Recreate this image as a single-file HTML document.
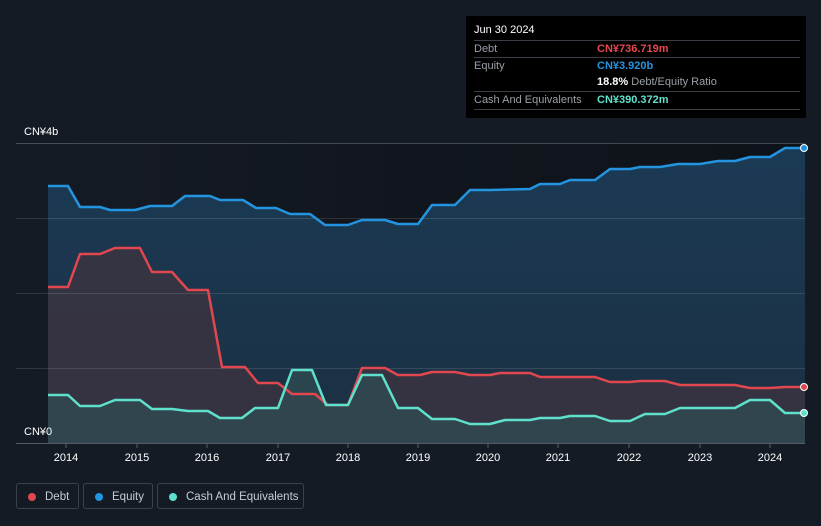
<!DOCTYPE html><html><head><style>
body{margin:0;width:821px;height:526px;background:#151b25;font-family:"Liberation Sans",sans-serif;overflow:hidden;position:relative}
.tt{position:absolute;left:466px;top:16px;width:340px;height:102px;background:#000;color:#fff;font-size:11px}
.row{position:absolute;left:8px;width:326px;border-top:1px solid #3a3f47;height:17px;line-height:17px}
.row span{position:absolute;left:123px}
.lg{position:absolute;top:483px;height:26px;border:1px solid #3b414b;border-radius:3px;color:#c8ccd2;font-size:11.5px;line-height:26px;box-sizing:border-box}
.lg i{position:absolute;left:11px;top:9px;width:8px;height:8px;border-radius:50%}
</style></head><body>
<svg width="821" height="526" style="position:absolute;left:0;top:0">
<defs>
<linearGradient id="eg" x1="0" y1="0" x2="0" y2="1"><stop offset="0" stop-color="#1b3a55"/><stop offset="1" stop-color="#1b3042"/></linearGradient>
<linearGradient id="bg" x1="0" y1="0" x2="1" y2="0"><stop offset="0" stop-color="#151b25"/><stop offset="0.5" stop-color="#11161e"/><stop offset="1" stop-color="#0e1219"/></linearGradient>
</defs>
<rect x="16" y="143" width="789" height="300" fill="url(#bg)"/>
<g stroke-linejoin="round">
<polygon fill="url(#eg)" points="48,443 48,186 68,186 80,207 100,207 110,210 135,210 150,206 172,206 185,196 210,196 220,200 243,200 256,208 276,208 290,214 310,214 325,225 348,225 362,220 385,220 398,224 418,224 432,205 455,205 470,190 490,190 530,189 540,184 560,184 570,180 595,180 610,169 630,169 640,167 660,167 678,164 700,164 718,161 735,161 750,157 770,157 785,148 805,148 805,443"/>
<polygon fill="#3a3441" opacity="0.85" points="48,443 48,287 68,287 80,254 100,254 115,248 140,248 152,272 172,272 188,290 208,290 222,367 245,367 258,383 278,383 292,394 315,394 328,405 348,405 362,368 385,368 398,375 420,375 432,372 455,372 470,375 490,375 500,373 530,373 540,377 595,377 610,382 630,382 640,381 665,381 680,385 735,385 750,388 770,388 785,387 805,387 805,443"/>
<polygon fill="#2f4a50" opacity="0.8" points="48,443 48,395 68,395 80,406 100,406 115,400 140,400 152,409 172,409 188,411 208,411 220,418 242,418 255,408 278,408 292,370 312,370 326,405 348,405 362,375 382,375 398,408 418,408 432,419 455,419 470,424 490,424 505,420 530,420 540,418 560,418 570,416 595,416 610,421 630,421 645,414 665,414 680,408 735,408 750,400 770,400 785,413 805,413 805,443"/>
</g>
<g stroke="#ffffff" stroke-opacity="0.12"><line x1="16" y1="218.5" x2="805" y2="218.5"/><line x1="16" y1="293.5" x2="805" y2="293.5"/><line x1="16" y1="368.5" x2="805" y2="368.5"/></g>
<line x1="16" y1="143.5" x2="805" y2="143.5" stroke="#ffffff" stroke-opacity="0.22"/>
<line x1="16" y1="443.5" x2="805" y2="443.5" stroke="#555c66"/>
<g fill="none" stroke-width="2.5" stroke-linejoin="round">
<polyline stroke="#2394df" points="48,186 68,186 80,207 100,207 110,210 135,210 150,206 172,206 185,196 210,196 220,200 243,200 256,208 276,208 290,214 310,214 325,225 348,225 362,220 385,220 398,224 418,224 432,205 455,205 470,190 490,190 530,189 540,184 560,184 570,180 595,180 610,169 630,169 640,167 660,167 678,164 700,164 718,161 735,161 750,157 770,157 785,148 805,148"/>
<polyline stroke="#e0474f" points="48,287 68,287 80,254 100,254 115,248 140,248 152,272 172,272 188,290 208,290 222,367 245,367 258,383 278,383 292,394 315,394 328,405 348,405 362,368 385,368 398,375 420,375 432,372 455,372 470,375 490,375 500,373 530,373 540,377 595,377 610,382 630,382 640,381 665,381 680,385 735,385 750,388 770,388 785,387 805,387"/>
<polyline stroke="#5fe0cc" points="48,395 68,395 80,406 100,406 115,400 140,400 152,409 172,409 188,411 208,411 220,418 242,418 255,408 278,408 292,370 312,370 326,405 348,405 362,375 382,375 398,408 418,408 432,419 455,419 470,424 490,424 505,420 530,420 540,418 560,418 570,416 595,416 610,421 630,421 645,414 665,414 680,408 735,408 750,400 770,400 785,413 805,413"/>
</g>
<circle cx="804" cy="148" r="3.5" fill="#2394df" stroke="#fff"/>
<circle cx="804" cy="387" r="3.5" fill="#e0474f" stroke="#fff"/>
<circle cx="804" cy="413" r="3.5" fill="#5fe0cc" stroke="#fff"/>
<g stroke="#555c66"><line x1="66" y1="443" x2="66" y2="448"/><line x1="137" y1="443" x2="137" y2="448"/><line x1="207" y1="443" x2="207" y2="448"/><line x1="278" y1="443" x2="278" y2="448"/><line x1="348" y1="443" x2="348" y2="448"/><line x1="418" y1="443" x2="418" y2="448"/><line x1="488" y1="443" x2="488" y2="448"/><line x1="558" y1="443" x2="558" y2="448"/><line x1="629" y1="443" x2="629" y2="448"/><line x1="700" y1="443" x2="700" y2="448"/><line x1="770" y1="443" x2="770" y2="448"/></g>
<g fill="#fff" font-size="11" text-anchor="middle" font-family="Liberation Sans,sans-serif">
<text x="66" y="461">2014</text><text x="137" y="461">2015</text><text x="207" y="461">2016</text><text x="278" y="461">2017</text><text x="348" y="461">2018</text><text x="418" y="461">2019</text><text x="488" y="461">2020</text><text x="558" y="461">2021</text><text x="629" y="461">2022</text><text x="700" y="461">2023</text><text x="770" y="461">2024</text>
</g>
<text x="24" y="135" fill="#fff" font-size="11" font-family="Liberation Sans,sans-serif">CN¥4b</text>
<text x="24" y="435" fill="#fff" font-size="11" font-family="Liberation Sans,sans-serif">CN¥0</text>
</svg>
<div class="tt">
<div style="position:absolute;left:8px;top:8px;font-size:11px">Jun 30 2024</div>
<div class="row" style="top:24px;color:#9aa0a8">Debt<span style="color:#e8474f;font-weight:bold">CN¥736.719m</span></div>
<div class="row" style="top:41px;color:#9aa0a8">Equity<span style="color:#2394df;font-weight:bold">CN¥3.920b</span></div>
<div class="row" style="top:58px;border-top:none;color:#9aa0a8"><span><b style="color:#fff">18.8%</b> Debt/Equity Ratio</span></div>
<div class="row" style="top:75px;color:#9aa0a8">Cash And Equivalents<span style="color:#5fe0cc;font-weight:bold">CN¥390.372m</span></div>
<div class="row" style="top:93px;height:0"></div>
</div>
<div class="lg" style="left:16px;width:63px"><i style="background:#e0474f"></i><span style="position:absolute;left:28px">Debt</span></div>
<div class="lg" style="left:83px;width:70px"><i style="background:#2394df"></i><span style="position:absolute;left:28px">Equity</span></div>
<div class="lg" style="left:157px;width:147px"><i style="background:#5fe0cc"></i><span style="position:absolute;left:28px">Cash And Equivalents</span></div>
</body></html>
